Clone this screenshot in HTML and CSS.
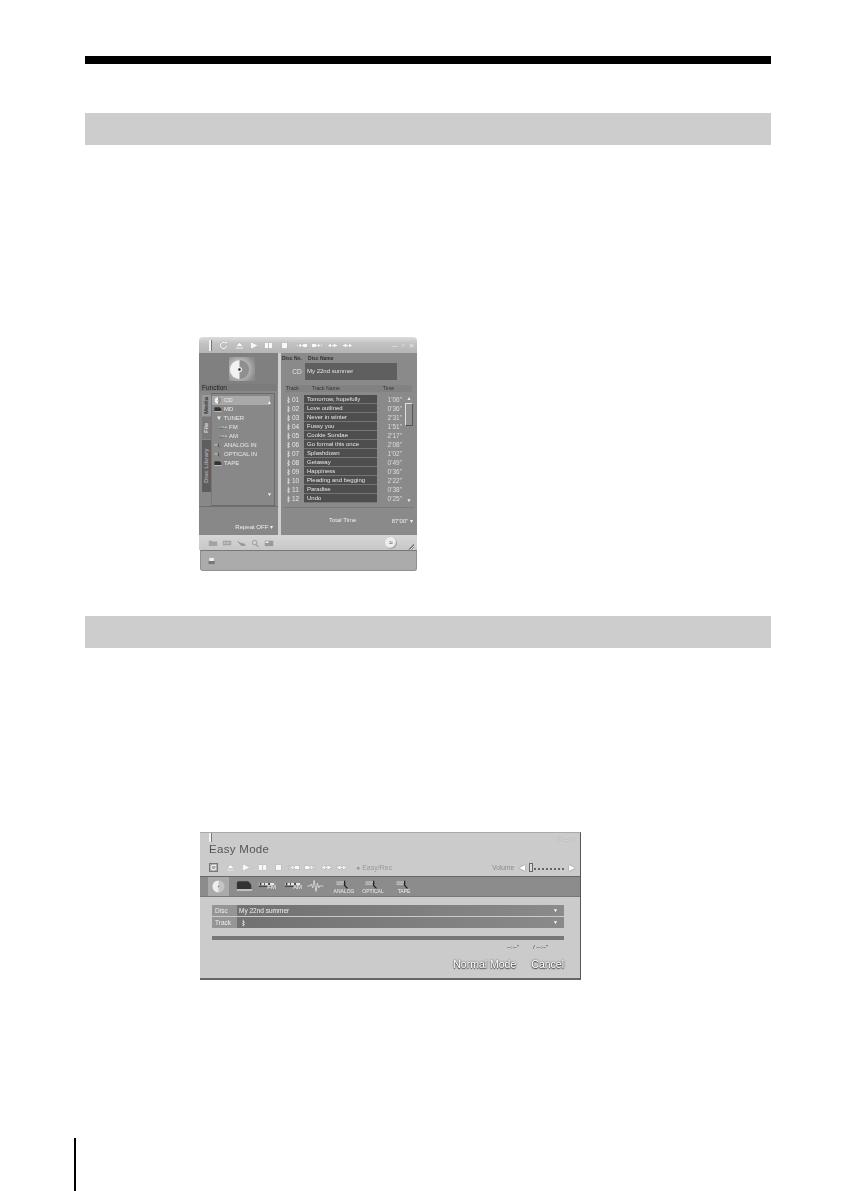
FILE: index.html
```html
<!DOCTYPE html>
<html lang="en">
<head>
<meta charset="utf-8">
<title>Manual page</title>
<link rel="stylesheet" href="styles.css">
</head>
<body>
<svg class="sprite" aria-hidden="true">
  <symbol id="i-refresh" viewBox="0 0 9 9"><path d="M7.5 4.5a3 3 0 1 1-1-2.2" fill="none" stroke="currentColor" stroke-width="1.3"/><path d="M5.2 1h2.6v2.6z" fill="currentColor"/></symbol>
  <symbol id="i-eject" viewBox="0 0 9 9"><path d="M4.5 1.5L8 5H1zM1 6.2h7v1.6H1z" fill="currentColor"/></symbol>
  <symbol id="i-play" viewBox="0 0 9 9"><path d="M1 2h2l5 2.5L3 7H1z" fill="currentColor"/></symbol>
  <symbol id="i-pause" viewBox="0 0 9 9"><path d="M1 1.500h3v6H1zM5 1.500h3v6H5z" fill="currentColor"/></symbol>
  <symbol id="i-stop" viewBox="0 0 9 9"><path d="M1.800 1.500h5.400v6H1.800z" fill="currentColor"/></symbol>
  <symbol id="i-prev" viewBox="0 0 12 9"><path d="M0.500 2.500h1.200v4H0.500zM2 4.500L5 2.500v4zM5 4.500l3-2v4zM8 2.500h3.500v4H8z" fill="currentColor"/></symbol>
  <symbol id="i-next" viewBox="0 0 12 9"><path d="M0.500 2.500H4v4H0.500zM4 2.500l3 2-3 2zM7 2.500l3 2-3 2zM10.300 2.500h1.200v4h-1.200z" fill="currentColor"/></symbol>
  <symbol id="i-rew" viewBox="0 0 11 9"><path d="M1 4.500l4-2.500v5zM5 4.500L9 2v5zM8.500 3.500H11v2H8.500z" fill="currentColor"/></symbol>
  <symbol id="i-ff" viewBox="0 0 11 9"><path d="M0 3.500h2.500v2H0zM2 2l4 2.500L2 7zM6 2l4 2.500L6 7z" fill="currentColor"/></symbol>
  <symbol id="i-note" viewBox="0 0 6 9"><path d="M3 .5v8M1.500 2l3 1.500-3 1.500 3 1.500-3 1" fill="none" stroke="currentColor" stroke-width=".8"/></symbol>
  <symbol id="i-disc" viewBox="0 0 24 24"><circle cx="12" cy="12" r="11" fill="#8f8f8f"/><path d="M12 1a11 11 0 0 0 0 22z" fill="#f2f2f2"/><circle cx="12" cy="12" r="3" fill="#eee"/><circle cx="12" cy="12" r="1.400" fill="#222"/></symbol>
  <symbol id="i-disc-pale" viewBox="0 0 24 24"><circle cx="12" cy="12" r="11" fill="#c4c4c4"/><path d="M12 1a11 11 0 0 0 0 22z" fill="#eee"/><circle cx="12" cy="12" r="1.500" fill="#777"/></symbol>
  <symbol id="i-tuner" viewBox="0 0 20 13"><path d="M1 3h18v2.500H1z" fill="#e8e8e8"/><path d="M2 3h2v2.500H2zM7 3h1v2.500H7zM12 3h2v2.500h-2z" fill="#333"/><path d="M1 7h10" stroke="#333" stroke-width="1"/></symbol>
  <symbol id="i-line" viewBox="0 0 24 13"><path d="M1 3h12M1 6h10" stroke="#eee" stroke-width="1.100"/><path d="M13 1v7l4 4" stroke="#111" stroke-width="1.600" fill="none"/></symbol>
  <symbol id="i-md" viewBox="0 0 20 13"><path d="M1 10V3c0-1 1-2 2-2h10c2 0 4 2 5 5v4z" fill="#333"/><path d="M1 10.500h18v1.500H1z" fill="#ddd"/></symbol>
  <symbol id="i-wave" viewBox="0 0 18 13"><path d="M0 6.500h3l1.500-2 1.500 4 1.500-8 2 12 1.500-9 1.500 5 1-2h4" fill="none" stroke="#e6e6e6" stroke-width=".8"/></symbol>
</svg>

<main class="page">
  <div class="rule"></div>
  <div class="band first"></div>

  <section class="normal">
    <header class="n-top">
      <span class="tick"></span>
      <svg class="ic n1"><use href="#i-refresh"/></svg>
      <svg class="ic n2"><use href="#i-eject"/></svg>
      <svg class="ic n3"><use href="#i-play"/></svg>
      <svg class="ic n4"><use href="#i-pause"/></svg>
      <svg class="ic n5"><use href="#i-stop"/></svg>
      <svg class="ic wide n6"><use href="#i-prev"/></svg>
      <svg class="ic wide n7"><use href="#i-next"/></svg>
      <svg class="ic wide n8"><use href="#i-rew"/></svg>
      <svg class="ic wide n9"><use href="#i-ff"/></svg>
      <span class="winctl">– ▫ ×</span>
    </header>
    <div class="n-main">
      <aside class="n-left">
        <div class="thumb-wrap"><div class="thumb"><svg class="thumb-disc"><use href="#i-disc"/></svg></div></div>
        <div class="strip fn">Function</div>
        <div class="lib">
          <div class="tabs">
            <span class="tab on">Media</span>
            <span class="tab">File</span>
            <span class="tab dark">Disc Library</span>
          </div>
          <div class="func-list">
            <div class="fi sel"><svg class="fi-ic"><use href="#i-disc"/></svg>CD<span class="up">▲</span></div>
            <div class="fi"><svg class="fi-ic"><use href="#i-md"/></svg>MD</div>
            <div class="fi tuner">▼ TUNER</div>
            <div class="fi sub"><svg class="fi-ic2"><use href="#i-tuner"/></svg>FM</div>
            <div class="fi sub"><svg class="fi-ic2"><use href="#i-tuner"/></svg>AM</div>
            <div class="fi"><svg class="fi-ic"><use href="#i-line"/></svg>ANALOG IN</div>
            <div class="fi"><svg class="fi-ic"><use href="#i-line"/></svg>OPTICAL IN</div>
            <div class="fi"><svg class="fi-ic"><use href="#i-md"/></svg>TAPE</div>
            <span class="down">▼</span>
          </div>
        </div>
        <div class="repeat">Repeat OFF ▾</div>
      </aside>
      <div class="n-right">
        <div class="disc-head"><span>Disc No.</span><span>Disc Name</span></div>
        <div class="disc-line"><span class="cd">CD</span><span class="disc-name">My 22nd summer</span></div>
        <div class="strip trk-head"><span>Track</span><span>Track Name</span><span>Time</span></div>
        <div class="tracks-wrap">
          <div class="tracks">
            <div class="trk"><svg class="nt"><use href="#i-note"/></svg><span>01</span><b>Tomorrow, hopefully</b><i>1'06"</i></div>
            <div class="trk"><svg class="nt"><use href="#i-note"/></svg><span>02</span><b>Love outlined</b><i>0'36"</i></div>
            <div class="trk"><svg class="nt"><use href="#i-note"/></svg><span>03</span><b>Never in winter</b><i>2'31"</i></div>
            <div class="trk"><svg class="nt"><use href="#i-note"/></svg><span>04</span><b>Fussy you</b><i>1'51"</i></div>
            <div class="trk"><svg class="nt"><use href="#i-note"/></svg><span>05</span><b>Cookie Sundae</b><i>2'17"</i></div>
            <div class="trk"><svg class="nt"><use href="#i-note"/></svg><span>06</span><b>Go formal this once</b><i>2'08"</i></div>
            <div class="trk"><svg class="nt"><use href="#i-note"/></svg><span>07</span><b>Splashdown</b><i>1'02"</i></div>
            <div class="trk"><svg class="nt"><use href="#i-note"/></svg><span>08</span><b>Getaway</b><i>0'49"</i></div>
            <div class="trk"><svg class="nt"><use href="#i-note"/></svg><span>09</span><b>Happiness</b><i>0'36"</i></div>
            <div class="trk"><svg class="nt"><use href="#i-note"/></svg><span>10</span><b>Pleading and begging</b><i>2'22"</i></div>
            <div class="trk"><svg class="nt"><use href="#i-note"/></svg><span>11</span><b>Paradise</b><i>0'38"</i></div>
            <div class="trk"><svg class="nt"><use href="#i-note"/></svg><span>12</span><b>Undo</b><i>0'25"</i></div>
          </div>
          <div class="scroll"><span class="ar">▲</span><span class="thumb-bar"></span><span class="ar last">▼</span></div>
        </div>
        <div class="total"><span>Total Time</span><span class="total-v">87'00" ▾</span></div>
      </div>
    </div>
    <div class="n-tools">
      <svg class="tool" viewBox="0 0 13 10"><path d="M1 2h4l1 1h6v6H1z" fill="#a3a3a3"/></svg>
      <svg class="tool" viewBox="0 0 13 10"><path d="M1 2h11v6H1z" fill="#a3a3a3"/><path d="M3 4v2M5 4v2M7 4v2M9 4v2" stroke="#ddd"/></svg>
      <svg class="tool" viewBox="0 0 13 10"><path d="M1 2l6 3 5 1v3H7z" fill="#999"/></svg>
      <svg class="tool" viewBox="0 0 13 10"><circle cx="6" cy="4.500" r="3" fill="none" stroke="#999" stroke-width="1.200"/><path d="M8 7l3 3" stroke="#999" stroke-width="1.400"/></svg>
      <svg class="tool" viewBox="0 0 13 10"><path d="M1 2h11v7H1z" fill="#999"/><path d="M2 3h4v2H2z" fill="#eee"/></svg>
      <span class="round">≈</span>
      <span class="grip"></span>
    </div>
    <div class="n-status"><svg class="tool" viewBox="0 0 13 10"><path d="M3 1h6v4H3z" fill="#eee"/><path d="M2 5h8v4H2z" fill="#777"/></svg></div>
  </section>

  <div class="band second"></div>

  <section class="easy">
    <div class="e-title-row"><span class="tick e"></span><h2>Easy Mode</h2><span class="e-ctl">? – ×</span></div>
    <div class="e-trans">
      <svg class="ic boxed"><use href="#i-refresh"/></svg>
      <svg class="ic e2"><use href="#i-eject"/></svg>
      <svg class="ic e3"><use href="#i-play"/></svg>
      <svg class="ic e3"><use href="#i-pause"/></svg>
      <svg class="ic e3"><use href="#i-stop"/></svg>
      <svg class="ic wide e5"><use href="#i-prev"/></svg>
      <svg class="ic wide e4"><use href="#i-next"/></svg>
      <svg class="ic wide e4"><use href="#i-rew"/></svg>
      <svg class="ic wide e4"><use href="#i-ff"/></svg>
      <span class="rec">● Easy/Rec</span>
      <span class="vol">Volume <b>◀</b><span class="slider"><span class="knob"></span></span><b>▶</b></span>
    </div>
    <div class="e-band">
      <div class="e-cd"><svg class="e-disc"><use href="#i-disc-pale"/></svg></div>
      <div class="e-src s-md"><svg class="src"><use href="#i-md"/></svg></div>
      <div class="e-src s-fm"><svg class="src"><use href="#i-tuner"/></svg><span class="ov">FM</span></div>
      <div class="e-src s-am"><svg class="src"><use href="#i-tuner"/></svg><span class="ov">AM</span></div>
      <div class="e-src s-wv"><svg class="src"><use href="#i-wave"/></svg></div>
      <div class="e-src s-an"><svg class="src sm"><use href="#i-line"/></svg><span>ANALOG</span></div>
      <div class="e-src s-op"><svg class="src sm"><use href="#i-line"/></svg><span>OPTICAL</span></div>
      <div class="e-src s-tp"><svg class="src sm"><use href="#i-line"/></svg><span>TAPE</span></div>
    </div>
    <div class="e-body">
      <div class="e-row"><span class="lbl">Disc</span><span class="val">My 22nd summer</span><span class="drop">▼</span></div>
      <div class="e-row"><span class="lbl">Track</span><span class="val"><svg class="nt"><use href="#i-note"/></svg></span><span class="drop">▼</span></div>
      <div class="progress"></div>
      <div class="times"><span>--:--"</span><span>/ --:--"</span></div>
      <div class="btns"><span>Normal Mode</span><span>Cancel</span></div>
    </div>
  </section>

  <div class="foot-line"></div>
</main>
</body>
</html>
```
FILE: styles.css
```css
* { box-sizing: border-box; }
html, body { margin: 0; padding: 0; background: #fff; }
body { font-family: "Liberation Sans", Arial, sans-serif; }
.sprite { display: none; }
.page { width: 841px; height: 1191px; overflow: hidden; padding-top: 56px; }

.rule { height: 8px; margin: 0 70px 0 85px; background: #000; }
.band { height: 32px; margin: 0 70px 0 85px; background: #cdcdcd; }
.band.first { margin-top: 49px; }
.band.second { margin-top: 45px; }

svg.ic { width: 9px; height: 9px; color: #f8f8f8; flex: none; filter: drop-shadow(0 .5px .5px #555); }
svg.ic.wide { width: 12px; }

/* Normal mode window */
.normal { width: 218px; height: 234px; margin: 192px 0 0 199px; display: flex; flex-direction: column; filter: blur(.45px); color: #e4e4e4; font-size: 6px; }
.n-top { height: 16px; background: linear-gradient(#dcdcdc, #c2c2c2 40%, #b5b5b5); display: flex; align-items: center; border-radius: 4px 4px 0 0; flex: none; }
.tick { width: 2px; height: 11px; margin-left: 10px; background: #f4f4f4; border-right: 1px solid #777; box-sizing: content-box; }
.n1 { margin-left: 7px; } .n2 { margin-left: 7px; } .n3 { margin-left: 6px; } .n4 { margin-left: 5px; } .n5 { margin-left: 7px; }
.n6 { margin-left: 7px; } .n7 { margin-left: 3px; } .n8 { margin-left: 3px; } .n9 { margin-left: 4px; }
.winctl { margin-left: auto; margin-right: 3px; font-size: 8px; color: #eee; word-spacing: 2.500px; }

.n-main { height: 182px; display: flex; background: #cfcfcf; flex: none; }
.n-left { width: 79px; background: #888; display: flex; flex-direction: column; }
.n-right { width: 135px; margin-left: 3px; flex: 1; background: #8a8a8a; display: flex; flex-direction: column; padding: 0 3px; }

.thumb-wrap { height: 31px; display: flex; padding: 4px 0 0 30px; background: #808080; }
.thumb { width: 26px; height: 24px; background: radial-gradient(circle at 40% 50%, #e8e8e8, #8a8a8a 85%); display: flex; align-items: center; }
.thumb-disc { width: 21px; height: 21px; }
.strip { background: #7b7b7b; height: 7px; line-height: 7px; color: #e8e8e8; }
.fn { margin: 0 1px; padding-left: 2px; font-size: 6.500px; color: #222; }

.lib { display: flex; height: 116px; padding: 2px 3px 0 3px; border-bottom: 1px solid #6e6e6e; }
.tabs { width: 9px; display: flex; flex-direction: column; gap: 1px; padding-top: 2px; }
.tab { writing-mode: vertical-rl; transform: rotate(180deg); text-align: center; font-weight: bold; font-size: 6px; height: 22px; line-height: 9px; background: #797979; color: #ddd; }
.tab.on { background: #999; color: #333; height: 21px; }
.tab.dark { background: #5e5e5e; height: 52px; color: #aaa; }
.func-list { flex: 1; border: 1px solid #6a6a6a; border-left-color: #777; position: relative; padding-top: 2px; }
.fi { height: 9px; line-height: 9px; display: flex; align-items: center; padding-left: 2px; font-size: 6px; color: #eaeaea; position: relative; }
.fi.sel { background: #a9a9a9; width: 58px; }
.fi-ic { width: 8px; height: 7px; margin-right: 2px; flex: none; }
.fi-ic2 { width: 8px; height: 6px; margin-right: 2px; flex: none; }
.fi.tuner { padding-left: 4px; font-size: 6px; }
.fi.sub { padding-left: 7px; }
.up, .down { color: #eee; font-size: 5px; }
.up { position: absolute; left: 55px; top: 2px; }
.down { position: absolute; left: 55px; bottom: 8px; }
.repeat { flex: 1; display: flex; align-items: flex-end; justify-content: flex-end; padding: 0 5px 5px 0; font-size: 6px; color: #eee; }

.disc-head { height: 9px; margin: 1px 0 0 -2px; display: flex; gap: 6px; font-size: 5px; color: #2e2e2e; line-height: 9px; font-weight: bold; }
.disc-line { height: 17px; display: flex; align-items: center; }
.cd { width: 21px; text-align: center; padding-left: 5px; font-size: 6.500px; }
.disc-name { width: 92px; height: 17px; line-height: 17px; background: #5f5f5f; padding-left: 2px; font-size: 6px; }
.trk-head { margin: 5px 0 0 1px; display: flex; font-size: 5.200px; color: #333; padding-left: 1px; background: #828282; width: 127px; }
.trk-head span:nth-child(2) { margin-left: 13px; }
.trk-head span:nth-child(3) { margin-left: 43px; }
.tracks-wrap { display: flex; margin-top: 3px; }
.tracks { display: flex; flex-direction: column; width: 120px; }
.trk { height: 9px; display: flex; align-items: center; font-size: 6px; line-height: 9px; color: #e6e6e6; }
.nt { width: 5px; height: 8px; color: #ddd; margin-left: 2px; flex: none; }
.trk span { width: 13px; padding-left: 1px; flex: none; font-size: 6.500px; }
.trk b { font-weight: normal; width: 73px; height: 9px; background: #4e4e4e; border-bottom: 1px solid #757575; padding-left: 3px; line-height: 8px; flex: none; }
.trk i { font-style: normal; width: 25px; text-align: right; font-size: 6.500px; color: #ddd; }
.scroll { width: 10px; display: flex; flex-direction: column; align-items: center; margin-left: 1px; }
.ar { font-size: 5px; color: #eee; height: 6px; line-height: 6px; }
.ar.last { margin-top: auto; }
.thumb-bar { width: 8px; height: 23px; margin-top: 2px; border: 1px solid #e0e0e0; border-right-color: #555; border-bottom-color: #555; background: #8f8f8f; }
.total { margin-top: 4px; padding: 9px 0 0 45px; border-top: 1px solid #7a7a7a; display: flex; font-size: 6px; color: #eee; }
.total-v { margin-left: auto; margin-right: 1px; }

.n-tools { height: 15px; background: linear-gradient(#d6d6d6, #c8c8c8); display: flex; align-items: center; gap: 4px; padding-left: 9px; flex: none; }
.tool { width: 10px; height: 8px; flex: none; }
.round { margin-left: auto; margin-right: 7px; width: 12px; height: 12px; line-height: 11px; border-radius: 50%; background: #eee; box-shadow: inset -1px -1px 1px #999; font-size: 7px; color: #333; text-align: center; }
.grip { width: 6px; height: 6px; margin: 8px 3px 0 0; background: repeating-linear-gradient(135deg, #777 0 1px, #ddd 1px 2px); clip-path: polygon(100% 0, 100% 100%, 0 100%); }
.n-status { height: 21px; margin-left: 1px; background: #ababab; border: 1px solid #8f8f8f; border-top-color: #777; border-radius: 0 0 3px 3px; display: flex; align-items: center; padding-left: 6px; flex: none; }

/* Easy mode window */
.easy { width: 381px; height: 148px; margin: 184px 0 0 200px; background: #cbcbcb; border-right: 1px solid #555; border-bottom: 2px solid #666; border-top: 1px solid #aaa; display: flex; flex-direction: column; filter: blur(.45px); }
.e-title-row { height: 26px; position: relative; flex: none; }
.tick.e { position: absolute; left: 9px; top: 0; height: 9px; margin: 0; }
.e-title-row h2 { margin: 0; padding: 10px 0 0 9px; font-weight: normal; font-size: 11.500px; line-height: 13px; color: #555; letter-spacing: .3px; }
.e-ctl { position: absolute; right: 5px; top: 3px; font-size: 7px; color: #fff; text-shadow: 0 0 1px #444; word-spacing: 1px; }
.e-trans { height: 17px; display: flex; align-items: center; padding-left: 9px; color: #fff; flex: none; }
.boxed { border: 1px solid #777; background: #aaa; }
.e2 { margin-left: 8px; } .e3 { margin-left: 7px; } .e4 { margin-left: 4px; } .e5 { margin-left: 5px; }
.rec { margin-left: 8px; font-size: 7px; color: #999; }
.vol { margin-left: auto; margin-right: 5px; display: flex; align-items: center; font-size: 6.500px; color: #8c8c8c; gap: 2px; }
.vol b { color: #fff; font-size: 8px; text-shadow: 0 0 1px #333; margin-left: 3px; font-weight: normal; }
.slider { width: 35px; height: 5px; margin-left: 2px; border-bottom: 2px dotted #666; position: relative; }
.knob { position: absolute; left: 0; top: -2px; width: 4px; height: 9px; border: 1px solid #666; background: #ddd; }
.e-band { height: 21px; background: #8c8c8c; border-top: 1px solid #666; border-bottom: 1px solid #777; display: flex; flex: none; }
.e-cd { width: 21px; margin-left: 8px; background: #aaa; display: flex; align-items: center; justify-content: center; }
.e-disc { width: 13px; height: 13px; }
.e-src { display: flex; flex-direction: column; align-items: center; font-size: 5px; color: #eee; line-height: 5px; width: 22px; position: relative; padding-top: 3px; }
.src { width: 17px; height: 12px; }
.src.sm { width: 20px; height: 9px; }
.s-md { margin-left: 4px; }
.s-fm { margin-left: 0; }
.s-am { margin-left: 4px; }
.s-wv { margin-left: 1px; }
.s-an { margin-left: 7px; }
.s-op { margin-left: 7px; }
.s-tp { margin-left: 9px; }
.ov { position: absolute; right: 1px; top: 8px; font-size: 6px; }
.e-body { flex: 1; padding: 8px 16px 0 12px; display: flex; flex-direction: column; }
.e-row { height: 11px; margin-bottom: 1px; display: flex; background: linear-gradient(90deg, #6f6f6f, #8a8a8a); color: #eee; font-size: 6.500px; line-height: 11px; }
.lbl { width: 25px; background: #959595; padding-left: 3px; }
.val { flex: 1; padding-left: 2px; display: flex; align-items: center; }
.drop { width: 11px; font-size: 5px; color: #fff; }
.progress { height: 4px; margin-top: 7px; background: #777; }
.times { display: flex; justify-content: flex-end; gap: 14px; margin-top: 3px; padding-right: 16px; font-size: 6px; line-height: 8px; color: #444; }
.btns { display: flex; justify-content: flex-end; gap: 15px; margin-top: 6px; font-size: 10.500px; line-height: 14px; color: #fff; text-shadow: 0 0 2px #333, 0 1px 1px #444; }
.foot-line { width: 2px; height: 53px; margin: 158px 0 0 74px; background: #000; }
```
